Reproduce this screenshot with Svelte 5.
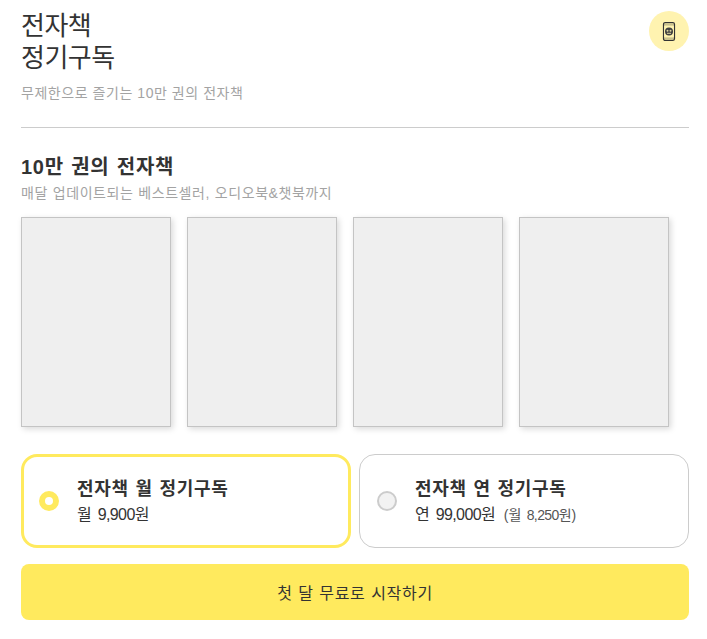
<script>
  const covers = [0, 1, 2, 3];
</script>

<main class="page">
  <header class="head">
    <div>
      <h1>전자책<br />정기구독</h1>
      <p class="sub">무제한으로 즐기는 10만 권의 전자책</p>
    </div>
    <div class="badge">
      <svg width="14" height="21" viewBox="0 0 14 21" fill="none">
        <rect x="1.5" y="1.5" width="11" height="18" rx="1.8" fill="#c9c18e" stroke="#333" stroke-width="1.2" />
        <rect x="2.1" y="4.6" width="9.8" height="11.8" fill="#fff3b0" />
        <circle cx="7" cy="10.5" r="4" fill="#3f3f3f" />
        <circle cx="5.5" cy="9.8" r="1" fill="#d9d2a0" />
        <circle cx="8.5" cy="9.8" r="1" fill="#d9d2a0" />
        <rect x="5" y="11.8" width="4" height="1" fill="#d9d2a0" />
      </svg>
    </div>
  </header>

  <hr />

  <section class="books">
    <h2>10만 권의 전자책</h2>
    <p class="sub2">매달 업데이트되는 베스트셀러, 오디오북&amp;챗북까지</p>
    <div class="covers">
      {#each covers as c (c)}
        <div class="cover"></div>
      {/each}
    </div>
  </section>

  <div class="plans">
    <div class="plan selected">
      <span class="radio on"></span>
      <div>
        <div class="name">전자책 월 정기구독</div>
        <div class="price">월 <span class="num">9,900</span>원</div>
      </div>
    </div>
    <div class="plan">
      <span class="radio"></span>
      <div>
        <div class="name">전자책 연 정기구독</div>
        <div class="price">연 <span class="num">99,000</span>원<small>(월 <span class="num-s">8,250</span>원)</small></div>
      </div>
    </div>
  </div>

  <button class="cta">첫 달 무료로 시작하기</button>
</main>

<style>
  :global(body) {
    margin: 0;
    background: #fff;
  }
  .page {
    box-sizing: border-box;
    width: 707px;
    height: 639px;
    padding: 10px 18px 0 21px;
    font-family: "Liberation Sans", "Noto Sans CJK KR", sans-serif;
    color: #333;
  }
  .head {
    display: flex;
    justify-content: space-between;
    align-items: flex-start;
    height: 117px;
  }
  h1 {
    margin: 0;
    font-size: 26px;
    line-height: 32px;
    font-weight: 400;
    letter-spacing: -0.5px;
    color: #333;
  }
  .sub {
    margin: 9px 0 0;
    font-size: 14px;
    line-height: 20px;
    letter-spacing: 0.55px;
    color: #a3a3a3;
  }
  .badge {
    width: 40px;
    height: 40px;
    margin-top: 1px;
    border-radius: 50%;
    background: #fff3b0;
    display: flex;
    align-items: center;
    justify-content: center;
  }
  hr {
    margin: 0;
    border: 0;
    border-top: 1px solid #ccc;
  }
  .books {
    margin-top: 25px;
  }
  h2 {
    margin: 0;
    font-size: 20px;
    line-height: 28px;
    font-weight: 700;
    letter-spacing: 0.75px;
    word-spacing: 1px;
    color: #333;
  }
  .sub2 {
    margin: 2px 0 0;
    font-size: 14px;
    line-height: 20px;
    letter-spacing: 0.55px;
    word-spacing: 0.5px;
    color: #a3a3a3;
  }
  .covers {
    display: flex;
    gap: 16px;
    margin-top: 14px;
  }
  .cover {
    box-sizing: border-box;
    width: 150px;
    height: 210px;
    background: #efefef;
    border: 1px solid #c4c4c4;
    box-shadow: 2px 2px 6px rgba(0, 0, 0, 0.15);
  }
  .plans {
    display: flex;
    gap: 8px;
    margin-top: 27px;
  }
  .plan {
    box-sizing: border-box;
    width: 330px;
    height: 94px;
    border: 1px solid #ccc;
    border-radius: 16px;
    display: flex;
    align-items: center;
    gap: 18px;
    padding-left: 17px;
  }
  .plan.selected {
    border: 3px solid #ffea5e;
    padding-left: 15px;
  }
  .radio {
    box-sizing: border-box;
    flex: none;
    width: 20px;
    height: 20px;
    border-radius: 50%;
    border: 2px solid #ccc;
    background: #f2f2f2;
  }
  .radio.on {
    border: 6px solid #ffea5e;
    background: #fff;
  }
  .name {
    font-size: 18px;
    line-height: 26px;
    font-weight: 700;
    letter-spacing: 0.7px;
    word-spacing: 1px;
    color: #333;
  }
  .price {
    font-size: 16px;
    line-height: 24px;
    margin-top: 1px;
    word-spacing: 1.5px;
    color: #333;
  }
  .num {
    letter-spacing: -0.6px;
  }
  .num-s {
    letter-spacing: -0.6px;
  }
  small {
    font-size: 14px;
    margin-left: 8px;
    color: #555;
  }
  .cta {
    display: block;
    width: 100%;
    height: 56px;
    margin-top: 16px;
    border: 0;
    border-radius: 8px;
    background: #ffea5e;
    font: inherit;
    font-size: 16px;
    letter-spacing: 0.7px;
    word-spacing: 0.5px;
    color: #333;
  }
</style>
